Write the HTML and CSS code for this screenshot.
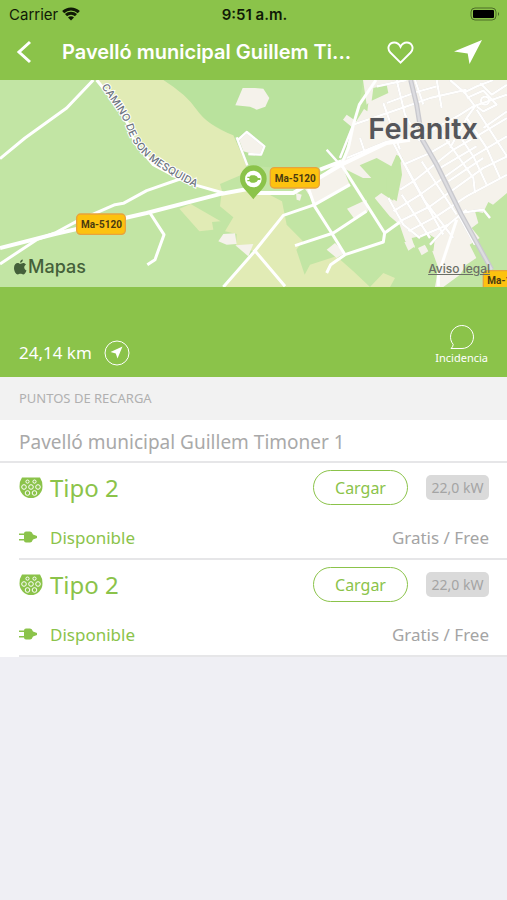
FILE: index.html
```
<!DOCTYPE html>
<html lang="es">

<head>
  <meta charset="UTF-8">
  <meta name="viewport" content="width=device-width, initial-scale=1.0">
  <title>Pavelló municipal Guillem Timoner</title>

  <link rel="stylesheet" href="styles.css">
</head>

<body>
  <header class="top">
    <div class="status">
      <div class="carrier">
        <span>Carrier</span>
        <svg class="wifi" viewBox="0 0 18 14" aria-hidden="true">
          <path d="M1.2 5.2a11.2 11.2 0 0 1 15.6 0" />
          <path d="M4 8.2a7.2 7.2 0 0 1 10 0" />
          <path class="dot" d="M9 13.6L6 10.5a4.2 4.2 0 0 1 6 0z" />
        </svg>
      </div>
      <div class="clock">9:51 a.m.</div>
      <svg class="battery" viewBox="0 0 30 14" aria-hidden="true">
        <rect class="shell" x="1" y="1" width="25" height="12" rx="4" />
        <rect x="3" y="3" width="21" height="8" rx="1" />
        <path d="M28 5q2 2 0 4z" opacity=".5" />
      </svg>
    </div>
    <nav class="navbar">
      <button class="nav_btn back" aria-label="Atrás">
        <svg viewBox="0 0 16 24"><path d="M14 2L3 12l11 10" /></svg>
      </button>
      <h1>Pavelló municipal Guillem Ti...</h1>
      <button class="nav_btn fav" aria-label="Favorito">
        <svg viewBox="0 0 28 24"><path d="M14 22.500L3.400 12C-.8 7.300 2.300 1.500 7.400 1.500c3.200 0 5.400 2 6.600 4.500 1.200-2.500 3.400-4.500 6.600-4.500 5.100 0 8.200 5.800 4 10.500z" /></svg>
      </button>
      <button class="nav_btn go" aria-label="Navegar">
        <svg viewBox="0 0 28 24"><path d="M28 0L15.500 24l-1.800-10.500L0 11.500z" /></svg>
      </button>
    </nav>
  </header>

  <section class="map">
    <svg class="map_canvas" viewBox="0 6 1521 621" preserveAspectRatio="xMidYMid slice">
      <path class="wood" d="M490 6H1090L1060 180 1020 260 960 280 740 262 700 175 620 130 560 60z" />
      <g class="field">
        <path d="M290 6H490Q560 50 590 95T700 172L740 262 725 290 660 318 668 345 590 322 510 285 445 240 400 185 380 120z" />
        <path d="M538 392L572 378 662 430 636 432 640 455 598 460z" />
        <path d="M664 350L760 335 800 346 846 370 860 440 909 490 889 515 914 590 930 560 1009 535 1060 580 1110 627H670L760 520 708 500 710 468 675 460 700 418 660 385z" />
        <path d="M1110 627L1150 585 1185 600 1170 627z" />
      </g>
      <g class="town">
        <path d="M1089 6H1521V345L1479 380 1465 372 1449 405 1425 400 1435 435 1415 450 1439 480 1409 500 1429 540 1399 560 1380 590 1330 627H1305L1315 570 1290 500 1260 475 1235 480 1245 510 1216 490 1199 440 1169 415 1124 360 1144 345 1190 375 1195 395 1179 370 1195 310 1179 290 1209 240 1189 230 1174 265 1130 240 1079 262 1114 300 1089 300 1029 270 1049 320 944 377 915 332 1029 240 1059 150 1029 125 1040 110 1069 130 1100 80z" />
        <path d="M728 30H765L790 32 808 60 796 86 770 95 750 86 706 82z" />
        <path d="M715 180L740 162 793 205 785 230 750 226 730 220z" />
        <path d="M655 490L670 468 705 466 710 498 680 500z" />
        <path d="M706 502L760 498 745 535z" />
        <path d="M1041 392L1099 365 1104 400 1065 425z" />
        <path d="M980 515L1005 495 1035 525 1010 540z" />
        <path d="M1213 492L1235 490 1245 505 1225 518z" />
        <path d="M1254 510L1275 500 1285 520 1265 532z" />
        <path d="M888 345L905 350 900 368 890 365z" />
      </g>
      <path class="grass" d="M1120 30L1160 20 1165 45 1115 68z M1088 90L1105 75 1102 100z M1262 480L1280 465 1305 480 1300 520 1285 515z M1160 300L1200 240 1206 290 1190 370 1160 350z" />
      <g class="street">
        <path d="M1130 25L1220 6M1160 75L1250 42 1310 25M1060 140L1220 85 1290 60 1400 35M1040 240L1150 195 1290 160 1380 110 1420 85 1521 50" />
        <path d="M1190 6L1215 110 1260 190M1150 75L1180 160 1200 215M1245 6L1270 80M1310 6L1325 90M1350 6L1395 45 1425 85 1400 120 1350 210" />
        <path d="M1180 195L1240 310 1330 470M1215 260L1275 370 1360 480M1165 360L1210 440 1260 480M1205 350L1290 480M1265 250L1370 410" />
        <path d="M1180 400L1260 350 1420 235 1521 175M1199 430L1290 385 1450 270 1521 235M1225 460L1310 415 1400 355 1521 290M1260 475L1345 440 1400 395" />
        <path d="M1200 335L1240 310 1360 215 1430 175 1521 120M1210 260L1290 225 1350 190" />
        <path d="M1320 160L1360 215 1420 300 1425 345M1350 130L1420 235 1460 320M1400 120L1460 210 1500 300M1430 95L1521 235M1320 270L1430 205M1345 310L1450 240" />
        <path d="M1390 45L1430 25 1480 6M1400 60L1450 38 1490 80 1450 100 1430 85M1440 15L1475 50 1521 20M1450 150L1521 100" />
        <path d="M1380 405L1450 395 1470 420M1290 500L1345 440M1375 410L1425 500" />
        <path d="M1020 240L1060 140M1080 180L1095 225M1029 270L980 215" />
        <path d="M710 178L742 262M715 185L740 162 793 205 783 230 745 228" />
        <circle cx="1455" cy="68" r="12" />
      </g>
      <path class="rail" d="M1232 6L1250 80 1267 185 1310 260 1384 410 1475 575" />
      <path class="rail_line" d="M1232 6L1250 80 1267 185 1310 260 1384 410 1475 575" />
      <g class="road">
        <path d="M0 242L75 180 200 90 280 6M290 6L350 80 385 140 405 195 460 260 540 303 590 322 670 345" />
        <path d="M0 558L110 485 165 465 230 430 345 380 370 376 440 338 540 303" />
        <path d="M450 405L492 470 465 545 442 560M670 627L762 522 850 412 944 380 1050 320" />
        <path d="M925 330L944 385 995 465 1035 530M885 503L1000 465 1099 400M980 585L992 560 1035 530 1150 492 1154 465 1200 432M762 515L855 625" />
        <path d="M1154 465L1024 260M1315 625V590L1370 425" />
        <path d="M1128 6L1078 80 1060 140 1045 210 1024 260" />
      </g>
      <path class="road main" d="M0 510L165 468 440 405 665 347 760 330" />
      <path class="road main" d="M760 345H880L1024 260 1160 195 1230 185M960 275L1024 250" />
      <path id="camino" class="guide" d="M304 26L350 92Q372 125 382 155 394 190 425 225 470 272 600 335" />
      <text class="street_name"><textPath href="#camino">CAMINO DE SON MESQUIDA</textPath></text>
      <text class="city" x="1105" y="183">Felanitx</text>
      <g class="shield">
        <rect x="230" y="408" width="146" height="61" rx="12" />
        <text x="243" y="450">Ma-5120</text>
        <rect x="811" y="269" width="147" height="61" rx="12" />
        <text x="824" y="311">Ma-5120</text>
        <rect x="1450" y="578" width="147" height="61" rx="12" />
        <text x="1462" y="617">Ma-1</text>
      </g>
      <g class="pin">
        <path d="M760 364C740 337 720 326 720 302a40 40 0 0 1 80 0C800 326 780 337 760 364z" />
        <circle cx="760" cy="303" r="25" />
        <path d="M742 296h7q2-4 6-4h8q9 2 11 8h7v6h-7q-2 6-11 8h-8q-4 0-6-4h-7v-4h6v-6h-6z" />
      </g>
    </svg>
    <div class="map_brand">
      <svg viewBox="0 0 14 16" aria-hidden="true">
        <path d="M9.800.5c.2 1.500-1.100 3.200-2.700 3.200C6.900 2.200 8.300.7 9.800.5z" />
        <path d="M7.200 4.800c.8 0 1.700-.9 3-.9 1.100 0 2.200.6 2.800 1.500-2.600 1.500-2.100 5 .5 6-.7 1.900-2 4-3.300 4-1 0-1.500-.6-2.700-.6s-1.700.6-2.700.6C3 15.400 1 12 1 8.900 1 5.700 2.900 4 4.700 4c1.200 0 1.900.8 2.500.8z" />
      </svg>
      <span>Mapas</span>
    </div>
    <a class="legal" href="#">Aviso legal</a>
  </section>

  <section class="summary">
    <a class="distance" href="#">
      <span>24,14 km</span>
      <svg viewBox="0 0 26 26" aria-hidden="true">
        <circle cx="13" cy="13" r="12" />
        <path d="M18.500 6.500L13.500 18.500 11.800 13.500 6.500 12z" />
      </svg>
    </a>
    <button class="report">
      <svg viewBox="0 0 26 26" aria-hidden="true">
        <path d="M2 24.500H13A11.500 11.500 0 1 0 4.200 20.400Q4 23 2 24.500z" />
      </svg>
      <span>Incidencia</span>
    </button>
  </section>

  <main>
    <h2>PUNTOS DE RECARGA</h2>
    <h3>Pavelló municipal Guillem Timoner 1</h3>
    <ul class="points">
      <li>
        <div class="row connector">
          <svg class="socket" viewBox="0 0 24 22" aria-hidden="true"><use href="#socket" /></svg>
          <span class="type">Tipo 2</span>
          <button class="charge">Cargar</button>
          <span class="power">22,0 kW</span>
        </div>
        <div class="row state">
          <svg class="plug" viewBox="0 0 18 12" aria-hidden="true"><use href="#plug" /></svg>
          <span class="available">Disponible</span>
          <span class="price">Gratis / Free</span>
        </div>
      </li>
      <li>
        <div class="row connector">
          <svg class="socket" viewBox="0 0 24 22" aria-hidden="true"><use href="#socket" /></svg>
          <span class="type">Tipo 2</span>
          <button class="charge">Cargar</button>
          <span class="power">22,0 kW</span>
        </div>
        <div class="row state">
          <svg class="plug" viewBox="0 0 18 12" aria-hidden="true"><use href="#plug" /></svg>
          <span class="available">Disponible</span>
          <span class="price">Gratis / Free</span>
        </div>
      </li>
    </ul>
  </main>

  <svg class="defs" aria-hidden="true">
    <symbol id="socket" viewBox="0 0 24 22">
      <path d="M3 .5H21Q23.500 4 23.500 9.500A11.500 11.500 0 0 1 .5 9.500Q.5 4 3 .5z" />
      <g fill="none" stroke="#fff" stroke-width="1">
        <circle cx="8.500" cy="4.600" r="1.600" />
        <circle cx="15.500" cy="4.600" r="1.600" />
        <circle cx="5" cy="10" r="2.300" />
        <circle cx="12" cy="10" r="2.300" />
        <circle cx="19" cy="10" r="2.300" />
        <circle cx="8.500" cy="16" r="2.300" />
        <circle cx="15.500" cy="16" r="2.300" />
      </g>
    </symbol>
    <symbol id="plug" viewBox="0 0 18 12">
      <path d="M0 2.500h5Q5 .5 7 .5h4q2 0 3 3l4 1.500v2l-4 1.500q-1 3-3 3H7q-2 0-2-2H0V8h5V4H0z" />
    </symbol>
  </svg>
</body>

</html>
```
FILE: styles.css
```
* {
  box-sizing: border-box;
  margin: 0;
  padding: 0;
}

body {
  background-color: #efeff4;
  color: #a4a4a4;
  font-family: "Noto Sans", sans-serif;
  min-height: 100vh;
}

button {
  background: none;
  border: 0;
  color: inherit;
  font-family: inherit;
}

a {
  color: inherit;
  text-decoration: none;
}

svg {
  display: block;
  flex: none;
}

.defs {
  height: 0;
  width: 0;
}

.top,
.summary {
  background-color: #8bc34a;
  color: #ffffff;
}

.top {
  font-family: Inter, sans-serif;
  height: 80px;
}

.status {
  align-items: center;
  color: #101a06;
  display: grid;
  font-size: 15px;
  grid-template-columns: 1fr auto 1fr;
  height: 28px;
  padding: 0 7px 0 9px;
}

.carrier {
  align-items: center;
  display: flex;
  gap: 4px;
}

.clock {
  font-weight: 600;
}

.wifi {
  fill: none;
  height: 14px;
  stroke: #101a06;
  stroke-width: 3;
  width: 18px;
}

.wifi .dot {
  fill: #101a06;
  stroke: none;
}

.battery {
  height: 14px;
  justify-self: end;
  width: 30px;
}

.battery .shell {
  fill: none;
  opacity: 0.5;
  stroke: #101a06;
}

.navbar {
  align-items: center;
  display: flex;
  height: 48px;
  padding: 0 25px 0 16px;
}

.navbar h1 {
  flex: 1;
  font-size: 20px;
  font-weight: 600;
  margin: 0 30px;
  overflow: hidden;
  text-overflow: ellipsis;
  white-space: nowrap;
}

.nav_btn svg {
  height: 24px;
  width: 28px;
}

.back svg {
  fill: none;
  stroke: #ffffff;
  stroke-width: 3;
  width: 16px;
}

.fav {
  margin-right: 40px;
}

.fav svg {
  fill: none;
  height: 23px;
  stroke: #ffffff;
  stroke-width: 2;
  width: 27px;
}

.go svg {
  fill: #ffffff;
}

.map {
  height: 207px;
  overflow: hidden;
  position: relative;
}

.map_canvas {
  background-color: #c2e5a4;
  height: 100%;
  width: 100%;
}

.wood {
  fill: #b9e29d;
}

.field {
  fill: #e1ebb5;
}

.town {
  fill: #f5f2eb;
}

.grass {
  fill: #c2e5a4;
}

.street,
.road,
.rail,
.rail_line,
.guide {
  fill: none;
  stroke: #ffffff;
  stroke-linejoin: round;
}

.street {
  filter: drop-shadow(0 0 2px #d5d3d0);
  stroke-width: 7;
}

.road {
  stroke-width: 9;
}

.road.main {
  stroke-width: 12;
}

.rail {
  stroke: #c9c9ce;
  stroke-width: 15;
}

.rail_line {
  stroke: #dcdce0;
  stroke-width: 7;
}

.guide {
  stroke: none;
}

.street_name,
.city {
  font-family: Inter, sans-serif;
}

.street_name {
  fill: #6d7480;
  font-size: 31px;
  font-weight: 500;
  paint-order: stroke;
  stroke: #ffffff;
  stroke-width: 6;
}

.city {
  fill: #55565a;
  font-size: 87px;
  font-weight: 600;
  paint-order: stroke;
  stroke: #f5f2eb;
  stroke-width: 6;
}

.shield rect {
  fill: #fdc20f;
  stroke: #e8a33c;
  stroke-width: 4;
}

.shield text {
  fill: #4a3a10;
  font-family: Roboto, sans-serif;
  font-size: 30px;
  font-weight: 700;
}

.pin {
  fill: #8bc34a;
}

.pin circle {
  fill: #ffffff;
}

.map_brand {
  align-items: center;
  bottom: 9px;
  color: #44603a;
  display: flex;
  font-family: Inter, sans-serif;
  font-size: 18px;
  font-weight: 500;
  gap: 1px;
  left: 13px;
  line-height: 22px;
  position: absolute;
}

.map_brand svg {
  fill: #44603a;
  height: 16px;
  width: 14px;
}

.legal {
  bottom: 10px;
  color: #6b6f66;
  font-family: Inter, sans-serif;
  font-size: 12px;
  font-weight: 500;
  line-height: 16px;
  position: absolute;
  right: 17px;
  text-decoration: underline;
}

.summary {
  align-items: flex-end;
  display: flex;
  height: 90px;
  justify-content: space-between;
  padding: 0 19px 11px;
}

.distance {
  align-items: center;
  display: flex;
  font-size: 17px;
  gap: 12px;
  line-height: 26px;
}

.distance svg,
.report svg {
  fill: none;
  height: 26px;
  stroke: #ffffff;
  width: 26px;
}

.distance path {
  fill: #ffffff;
  stroke: none;
}

.report {
  align-items: center;
  display: flex;
  flex-direction: column;
  font-size: 11px;
  line-height: 16px;
}

h2 {
  background-color: #f2f2f2;
  color: #b0b0b0;
  font-size: 13px;
  font-weight: 400;
  line-height: 43px;
  padding: 0 19px;
}

h3 {
  background-color: #ffffff;
  border-bottom: 2px solid #e6e6e8;
  color: #a9a9a9;
  font-size: 19px;
  font-weight: 400;
  line-height: 38px;
  padding: 3px 19px 0;
}

.points {
  background-color: #ffffff;
  list-style: none;
  padding-left: 19px;
}

.points li {
  border-bottom: 2px solid #e6e6e8;
  padding: 7px 18px 5px 0;
}

.row {
  align-items: center;
  display: flex;
}

.connector {
  height: 35px;
  margin-bottom: 16px;
}

.socket {
  fill: #8bc34a;
  height: 22px;
  width: 24px;
}

.type {
  color: #8bc34a;
  flex: 1;
  font-size: 24px;
  padding-left: 7px;
}

.charge {
  border: 1px solid #8bc34a;
  border-radius: 18px;
  color: #8bc34a;
  font-size: 16px;
  height: 35px;
  margin-right: 18px;
  width: 95px;
}

.power {
  background-color: #dadada;
  border-radius: 5px;
  font-size: 14px;
  line-height: 25px;
  text-align: center;
  width: 63px;
}

.state {
  font-size: 17px;
  height: 32px;
}

.plug {
  fill: #8bc34a;
  height: 12px;
  width: 18px;
}

.available {
  color: #8bc34a;
  flex: 1;
  padding-left: 13px;
}
```
